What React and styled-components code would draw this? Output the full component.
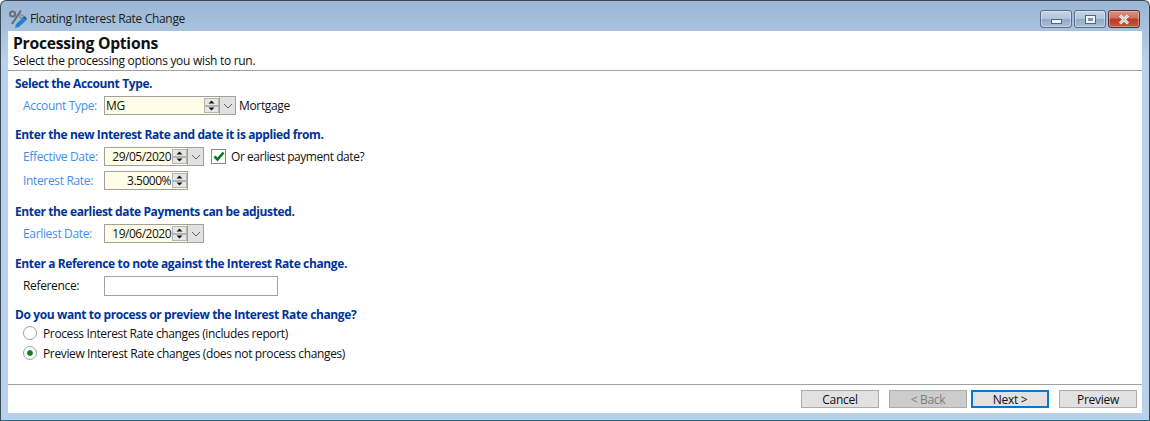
import styled, { createGlobalStyle } from 'styled-components';

const GlobalStyle = createGlobalStyle`
  html, body {
    margin: 0;
    padding: 0;
    background: #fff;
  }
  * {
    box-sizing: border-box;
  }
`;

const PercentIcon = () => (
  <svg width='18' height='20' viewBox='0 0 18 20'>
    <circle cx='3.6' cy='5' r='2.6' fill='none' stroke='#6a6f74' strokeWidth='2' />
    <circle cx='12.5' cy='7.5' r='1.8' fill='none' stroke='#8a8f94' strokeWidth='1.4' />
    <path d='M12 1.5 L3 15' stroke='#6a6f74' strokeWidth='2.2' />
    <path d='M6 19 L7 15 L14 8.5 L17 11.5 L10 18 Z' fill='#2f7fc8' />
    <path d='M14 8.5 L15.5 7 L18 9.5 L17 11.5 Z' fill='#1d5c9b' />
  </svg>
);

const Arrow = ({ up }) => (
  <svg width='7' height='4' viewBox='0 0 7 4'>
    <path d={up ? 'M3.5 0.5 L6.5 3.5 L0.5 3.5 Z' : 'M0.5 0.5 L6.5 0.5 L3.5 3.5 Z'} fill='#111' />
  </svg>
);

const Chevron = () => (
  <svg width='10' height='6' viewBox='0 0 10 6'>
    <path d='M1 1 L5 5 L9 1' fill='none' stroke='#606060' strokeWidth='1' />
  </svg>
);

const Spinner = () => (
  <SpinBox>
    <SpinBtn><Arrow up /></SpinBtn>
    <SpinBtn><Arrow /></SpinBtn>
  </SpinBox>
);

const Row = ({ label, plain, children }) => (
  <FieldRow>
    <Label $plain={plain}>{label}</Label>
    {children}
  </FieldRow>
);

const App = () => (
  <>
    <GlobalStyle />
    <Window>
      <TitleBar>
        <TitleLeft>
          <PercentIcon />
          <TitleText>Floating Interest Rate Change</TitleText>
        </TitleLeft>
        <Controls>
          <CtlBtn>
            <MinGlyph />
          </CtlBtn>
          <CtlBtn>
            <MaxGlyph />
          </CtlBtn>
          <CtlBtn $close>
            <svg width='14' height='11' viewBox='0 0 14 11'>
              <path d='M3 1.5 L11 9.5 M11 1.5 L3 9.5' stroke='#fff' strokeWidth='3' />
              <path d='M3 1.5 L11 9.5 M11 1.5 L3 9.5' stroke='#5b6470' strokeWidth='0.6' />
            </svg>
          </CtlBtn>
        </Controls>
      </TitleBar>
      <Client>
        <Header>
          <HeaderTitle>Processing Options</HeaderTitle>
          <HeaderSub>Select the processing options you wish to run.</HeaderSub>
        </Header>
        <Form>
          <Section $h={51}>
            <SectionHead>Select the Account Type.</SectionHead>
            <Row label='Account Type:'>
              <Field $w={100}>MG</Field>
              <Spinner />
              <DropBtn />
              <AfterText>Mortgage</AfterText>
            </Row>
          </Section>
          <Section $h={77}>
            <SectionHead>Enter the new Interest Rate and date it is applied from.</SectionHead>
            <Row label='Effective Date:'>
              <Field $w={68} $right>29/05/2020</Field>
              <Spinner />
              <DropBtn />
              <CheckBox>
                <svg width='12' height='11' viewBox='0 0 12 11'>
                  <path d='M1.5 5.5 L4.5 8.5 L10.5 1.5' fill='none' stroke='#0b7a1e' strokeWidth='2.6' />
                </svg>
              </CheckBox>
              <CheckText>Or earliest payment date?</CheckText>
            </Row>
            <Row label='Interest Rate:'>
              <Field $w={68} $right>3.5000%</Field>
              <Spinner />
            </Row>
          </Section>
          <Section $h={52}>
            <SectionHead>Enter the earliest date Payments can be adjusted.</SectionHead>
            <Row label='Earliest Date:'>
              <Field $w={68} $right>19/06/2020</Field>
              <Spinner />
              <DropBtn />
            </Row>
          </Section>
          <Section $h={51}>
            <SectionHead>Enter a Reference to note against the Interest Rate change.</SectionHead>
            <Row label='Reference:' plain>
              <RefInput />
            </Row>
          </Section>
          <Section>
            <SectionHead>Do you want to process or preview the Interest Rate change?</SectionHead>
            <RadioList>
              <RadioRow>
                <Radio />
                Process Interest Rate changes (includes report)
              </RadioRow>
              <RadioRow>
                <Radio $on />
                Preview Interest Rate changes (does not process changes)
              </RadioRow>
            </RadioList>
          </Section>
        </Form>
        <Footer>
          <Button>Cancel</Button>
          <Button $disabled>&lt; Back</Button>
          <Button $primary>Next &gt;</Button>
          <Button>Preview</Button>
        </Footer>
      </Client>
    </Window>
  </>
);

export default App;

const Window = styled.div`
  width: 1150px;
  height: 421px;
  display: flex;
  flex-direction: column;
  padding: 0 8px 7px;
  background: linear-gradient(180deg, #9bb6d3 0px, #a9c3de 31px, #b9d1ea 60px, #b9d1ea 100%);
  border: 1px solid #3a4a58;
  border-bottom-color: #1a6f86;
  border-radius: 6px 6px 0 0;
  font-family: 'Open Sans', 'Noto Sans', sans-serif;
  font-size: 12px;
  letter-spacing: -0.3px;
  color: #111;
  overflow: hidden;
`;
const TitleBar = styled.div`
  height: 30px;
  flex: none;
  display: flex;
  align-items: flex-start;
  justify-content: space-between;
`;
const TitleLeft = styled.div`
  display: flex;
  align-items: center;
  gap: 3px;
  height: 30px;
  padding-top: 6px;
`;
const TitleText = styled.span`
  color: #1c1c1c;
  line-height: 16px;
  letter-spacing: -0.32px;
`;
const Controls = styled.div`
  display: flex;
  gap: 2px;
  padding: 9px 1px 0 0;
`;
const CtlBtn = styled.div`
  width: 32px;
  height: 18px;
  display: flex;
  align-items: center;
  justify-content: center;
  border: 1px solid ${({ $close }) => ($close ? '#5d2a34' : '#5b6d88')};
  border-radius: 3px;
  box-shadow: inset 0 0 0 1px rgba(255, 255, 255, 0.35);
  background: ${({ $close }) =>
    $close
      ? 'linear-gradient(180deg, #dc8f82 0%, #d0705f 45%, #b83a23 50%, #c25a40 100%)'
      : 'linear-gradient(180deg, #c5d6e8 0%, #afc5dc 48%, #91abc8 52%, #a7bfd8 100%)'};
`;
const MinGlyph = styled.div`
  width: 11px;
  height: 5px;
  margin-top: 4px;
  background: #f0f2f5;
  border: 1px solid #5b6470;
`;
const MaxGlyph = styled.div`
  width: 9px;
  height: 7px;
  background: #7f95ad;
  border: 2px solid #f0f2f5;
  outline: 1px solid #5b6470;
`;
const Client = styled.div`
  flex: 1;
  min-height: 0;
  display: flex;
  flex-direction: column;
  background: #fff;
  width: 1134px;
  margin-left: -1px;
`;
const Header = styled.div`
  height: 40px;
  flex: none;
  padding: 3px 0 0 5px;
  border-bottom: 1px solid #a0a0a0;
`;
const HeaderTitle = styled.div`
  font-size: 15.7px;
  font-weight: 700;
  line-height: 19px;
  color: #111;
  letter-spacing: -0.25px;
`;
const HeaderSub = styled.div`
  line-height: 15px;
`;
const Form = styled.div`
  flex: 1;
  min-height: 0;
  display: flex;
  flex-direction: column;
  padding: 5px 0 0 7px;
`;
const Section = styled.div`
  display: flex;
  flex-direction: column;
  height: ${({ $h }) => ($h ? `${$h}px` : 'auto')};
`;
const SectionHead = styled.div`
  font-weight: 700;
  line-height: 16px;
  color: #003399;
  letter-spacing: -0.38px;
`;
const FieldRow = styled.div`
  display: flex;
  align-items: center;
  height: 19px;
  margin: 4px 0 0 8px;
  letter-spacing: -0.34px;
  & + & {
    margin-top: 5px;
  }
`;
const Label = styled.div`
  width: 81px;
  flex: none;
  color: ${({ $plain }) => ($plain ? '#111' : '#3f8fee')};
`;
const Field = styled.div`
  width: ${({ $w }) => $w}px;
  height: 19px;
  flex: none;
  line-height: 17px;
  padding: 0 1px;
  text-align: ${({ $right }) => ($right ? 'right' : 'left')};
  letter-spacing: ${({ $right }) => ($right ? '-0.5px' : '-0.2px')};
  background: #fffde6;
  border: 1px solid #a0a0a0;
  border-right: 0;
  color: #111;
`;
const SpinBox = styled.div`
  width: 16px;
  height: 19px;
  flex: none;
  display: flex;
  flex-direction: column;
  justify-content: space-between;
  padding: 1px 0;
  background: #fffde6;
  border: 1px solid #a0a0a0;
  border-left: 0;
`;
const SpinBtn = styled.div`
  width: 15px;
  height: 8px;
  display: flex;
  align-items: center;
  justify-content: center;
  background: #e6e6e6;
  border: 1px solid #b4b4b4;
`;
const DropBtn = styled.div.attrs({ children: <Chevron /> })`
  width: 16px;
  height: 19px;
  flex: none;
  display: flex;
  align-items: center;
  justify-content: center;
  background: #e1e1e1;
  border: 1px solid #a0a0a0;
  border-left: 0;
`;
const AfterText = styled.span`
  margin-left: 3px;
`;
const CheckBox = styled.div`
  width: 15px;
  height: 15px;
  margin-left: 7px;
  flex: none;
  display: flex;
  align-items: center;
  justify-content: center;
  border: 1px solid #8a8a8a;
  background: #fff;
`;
const CheckText = styled.span`
  margin-left: 5px;
  letter-spacing: -0.45px;
`;
const RefInput = styled.div`
  width: 174px;
  height: 20px;
  background: #fff;
  border: 1px solid #a0a0a0;
`;
const RadioList = styled.div`
  display: flex;
  flex-direction: column;
  gap: 4px;
  margin: 2px 0 0 8px;
`;
const RadioRow = styled.div`
  display: flex;
  align-items: center;
  gap: 6px;
  height: 16px;
  letter-spacing: -0.37px;
`;
const Radio = styled.div`
  width: 14px;
  height: 14px;
  flex: none;
  border-radius: 50%;
  border: 1px solid #a0a0a0;
  background: ${({ $on }) =>
    $on ? 'radial-gradient(circle, #0a7d1c 0, #0a7d1c 2.4px, #fff 3.2px)' : '#fff'};
`;
const Footer = styled.div`
  height: 29px;
  flex: none;
  display: flex;
  align-items: flex-start;
  padding: 5px 5px 0 0;
  justify-content: flex-end;
  border-top: 1px solid #a0a0a0;
`;
const Button = styled.div`
  width: 78px;
  height: 18px;
  margin-left: ${({ $primary }) => ($primary ? '4px' : '10px')};
  display: flex;
  align-items: center;
  justify-content: center;
  background: ${({ $disabled }) => ($disabled ? '#cccccc' : '#e1e1e1')};
  border: ${({ $primary }) => ($primary ? '2px solid #0078d7' : '1px solid #adadad')};
  color: ${({ $disabled }) => ($disabled ? '#7d7d7d' : '#111')};
`;
